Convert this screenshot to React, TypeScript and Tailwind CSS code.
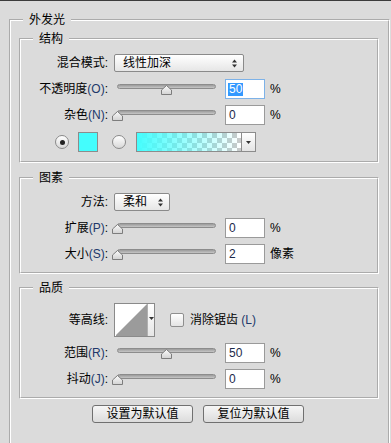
import type { ReactNode } from 'react';

// 外发光（图层样式）面板

function Label({ text, hot }: { text: string; hot?: string }) {
  return (
    <div className="w-[87px] shrink-0 whitespace-nowrap text-right">
      {text}
      {hot && <span className="text-[#21386a]">({hot})</span>}:
    </div>
  );
}

function Thumb() {
  return (
    <svg width="11" height="10" viewBox="0 0 11 10">
      <defs>
        <linearGradient id="thumbFill" x1="0" y1="0" x2="0" y2="1">
          <stop offset="0" stopColor="#fbfbfb" />
          <stop offset="1" stopColor="#d2d2d2" />
        </linearGradient>
      </defs>
      <polygon
        points="0.5,9.5 0.5,5 5.5,0.5 10.5,5 10.5,9.5"
        fill="url(#thumbFill)"
        stroke="#7d7d7d"
        strokeWidth="1"
      />
    </svg>
  );
}

function Slider({ value }: { value: number }) {
  return (
    <div className="relative ml-[3px] h-full w-[111px] shrink-0">
      <div className="absolute left-[6px] right-[6px] top-[5px] h-[5px] rounded-full border border-[#8c8c8c] bg-gradient-to-b from-[#9b9b9b] to-[#c6c6c6]" />
      <div className="absolute left-[6px] right-[6px] top-[6px] h-[10px]">
        <div className="absolute top-0" style={{ left: `calc(${value}% - 5.5px)` }}>
          <Thumb />
        </div>
      </div>
    </div>
  );
}

function Field({ value, focused, unit }: { value: string; focused?: boolean; unit: string }) {
  return (
    <>
      <div
        className={
          focused
            ? 'ml-[3px] flex h-[20px] w-[40px] shrink-0 items-center border border-[#7db2e8] bg-white pl-[2px]'
            : 'ml-[3px] flex h-[20px] w-[40px] shrink-0 items-center border border-[#9a9a9a] bg-white pl-[3px]'
        }
      >
        {focused ? (
          <span className="bg-[#3399ff] px-[1px] leading-[13px] text-white">{value}</span>
        ) : (
          <span className="text-[#1c2a4a]">{value}</span>
        )}
      </div>
      <span className="ml-[5px]">{unit}</span>
    </>
  );
}

function UpDown() {
  return (
    <svg width="5" height="9" viewBox="0 0 5 9" fill="#333">
      <polygon points="2.5,0.5 5,3.5 0,3.5" />
      <polygon points="0,5.5 5,5.5 2.5,8.5" />
    </svg>
  );
}

function DownArrow() {
  return (
    <svg width="5" height="3" viewBox="0 0 5 3" fill="#333">
      <polygon points="0,0 5,0 2.5,3" />
    </svg>
  );
}

function Select({ text, width }: { text: string; width: string }) {
  return (
    <div
      className={`ml-[6px] flex h-[18px] shrink-0 items-center justify-between rounded-[2px] border border-[#8a8a8a] bg-gradient-to-b from-white to-[#e6e6e6] pl-[8px] pr-[6px] ${width}`}
    >
      <span>{text}</span>
      <UpDown />
    </div>
  );
}

function Radio({ checked }: { checked?: boolean }) {
  return (
    <div className="flex h-[14px] w-[14px] shrink-0 items-center justify-center rounded-full border border-[#8a8a8a] bg-gradient-to-b from-white to-[#d8d8d8]">
      {checked && <div className="h-[5px] w-[5px] rounded-full bg-[#222]" />}
    </div>
  );
}

function Group({ title, className, children }: { title: string; className: string; children: ReactNode }) {
  return (
    <fieldset className={`border-2 border-white [--tw-border-style:groove] ${className}`}>
      <legend className="ml-[12px] px-[6px] leading-[14px]">{title}</legend>
      {children}
    </fieldset>
  );
}

export default function App() {
  return (
    <div className="h-[443px] w-[391px] overflow-hidden border-t border-[#3b3b3b] bg-[#dbdbdb] pt-[12px] font-['Liberation_Sans','Noto_Sans_CJK_SC',sans-serif] text-[12px] text-black">
      <fieldset className="ml-[9px] h-[460px] w-[381px] border-2 border-white pl-[8px] pr-[9px] pt-[5px] [--tw-border-style:groove]">
        <legend className="ml-[4px] px-[6px] leading-[14px]">外发光</legend>

        <Group title="结构" className="pt-[8px] pb-[9px]">
          <div className="flex h-[18px] items-center">
            <Label text="混合模式" />
            <Select text="线性加深" width="w-[130px]" />
          </div>
          <div className="mt-[7px] flex h-[20px] items-center">
            <Label text="不透明度" hot="O" />
            <Slider value={50} />
            <Field value="50" focused unit="%" />
          </div>
          <div className="mt-[6px] flex h-[20px] items-center">
            <Label text="杂色" hot="N" />
            <Slider value={0} />
            <Field value="0" unit="%" />
          </div>
          <div className="mt-[7px] flex h-[20px] items-center pl-[34px]">
            <Radio checked />
            <div className="ml-[9px] h-[20px] w-[20px] border border-[#8c8c8c] bg-[#44fdfd]" />
            <div className="ml-[14px]">
              <Radio />
            </div>
            <div className="ml-[10px] flex h-[20px] border border-[#8c8c8c]">
              <div className="h-full w-[104px] [background:linear-gradient(to_right,#44fdfd,rgba(68,253,253,0)),repeating-conic-gradient(#c9c9c9_0_25%,#ffffff_0_50%)_0_0/10px_10px]" />
              <div className="flex h-full w-[14px] items-center justify-center border-l border-[#8c8c8c] bg-gradient-to-b from-white to-[#e4e4e4]">
                <DownArrow />
              </div>
            </div>
          </div>
        </Group>

        <Group title="图素" className="mt-[8px] pt-[8px] pb-[8px]">
          <div className="flex h-[18px] items-center">
            <Label text="方法" />
            <Select text="柔和" width="w-[56px]" />
          </div>
          <div className="mt-[7px] flex h-[20px] items-center">
            <Label text="扩展" hot="P" />
            <Slider value={0} />
            <Field value="0" unit="%" />
          </div>
          <div className="mt-[6px] flex h-[20px] items-center">
            <Label text="大小" hot="S" />
            <Slider value={0} />
            <Field value="2" unit="像素" />
          </div>
        </Group>

        <Group title="品质" className="mt-[7px] pt-[8px] pb-[8px]">
          <div className="flex h-[34px] items-center">
            <Label text="等高线" />
            <div className="ml-[6px] flex h-[34px] w-[41px] shrink-0 border border-[#8a8a8a] bg-white">
              <svg width="32" height="32" viewBox="0 0 32 32" className="shrink-0">
                <polygon points="1,31 32,0 32,32 1,32" fill="#9b9b9b" />
              </svg>
              <div className="flex w-full justify-center border-l border-[#b0b0b0] bg-gradient-to-b from-white to-[#e6e6e6] pt-[13px]">
                <DownArrow />
              </div>
            </div>
            <div className="ml-[15px] h-[14px] w-[14px] shrink-0 rounded-[2px] border border-[#8f8f8f] bg-gradient-to-b from-white to-[#e4e4e4]" />
            <span className="ml-[6px] whitespace-nowrap">
              消除锯齿 <span className="text-[#21386a]">(L)</span>
            </span>
          </div>
          <div className="mt-[6px] flex h-[20px] items-center">
            <Label text="范围" hot="R" />
            <Slider value={50} />
            <Field value="50" unit="%" />
          </div>
          <div className="mt-[6px] flex h-[20px] items-center">
            <Label text="抖动" hot="J" />
            <Slider value={0} />
            <Field value="0" unit="%" />
          </div>
        </Group>

        <div className="mt-[6px] flex justify-center gap-[10px] pr-[2px]">
          <button className="h-[18px] w-[101px] rounded-[3px] border border-[#707070] bg-gradient-to-b from-[#f6f6f6] to-[#dcdcdc] leading-[16px]">
            设置为默认值
          </button>
          <button className="h-[18px] w-[101px] rounded-[3px] border border-[#707070] bg-gradient-to-b from-[#f6f6f6] to-[#dcdcdc] leading-[16px]">
            复位为默认值
          </button>
        </div>
      </fieldset>
    </div>
  );
}
